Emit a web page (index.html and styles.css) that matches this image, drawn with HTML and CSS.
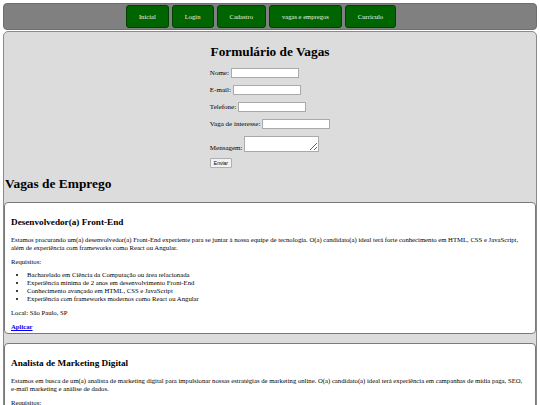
FILE: index.html
```html
<!DOCTYPE html>
<html lang="pt-BR">
<head>
  <meta charset="UTF-8">
  <title>Vagas de Emprego</title>
  <link rel="stylesheet" href="styles.css">
</head>
<body>

  <header class="topbar">
    <nav class="menu">
      <a href="#" class="menu-btn">Inicial</a>
      <a href="#" class="menu-btn">Login</a>
      <a href="#" class="menu-btn">Cadastro</a>
      <a href="#" class="menu-btn">vagas e empregos</a>
      <a href="#" class="menu-btn">Curriculo</a>
    </nav>
  </header>

  <main class="content">
    <section class="form-box">
      <h2>Formulário de Vagas</h2>
      <form class="vaga-form">
        <p><label for="nome">Nome:</label> <input type="text" id="nome"></p>
        <p><label for="email">E-mail:</label> <input type="email" id="email"></p>
        <p><label for="tel">Telefone:</label> <input type="tel" id="tel"></p>
        <p><label for="vaga">Vaga de interesse:</label> <input type="text" id="vaga"></p>
        <p class="msg-row"><label for="msg">Mensagem:</label> <textarea id="msg"></textarea></p>
        <button type="submit">Enviar</button>
      </form>
    </section>

    <h1>Vagas de Emprego</h1>

    <!-- Vaga 1 -->
    <article class="vaga">
      <h3>Desenvolvedor(a) Front-End</h3>
      <p>Estamos procurando um(a) desenvolvedor(a) Front-End experiente para se juntar à nossa equipe de tecnologia. O(a) candidato(a) ideal terá forte conhecimento em HTML, CSS e JavaScript, além de experiência com frameworks como React ou Angular.</p>
      <p class="req">Requisitos:</p>
      <ul>
        <li>Bacharelado em Ciência da Computação ou área relacionada</li>
        <li>Experiência mínima de 2 anos em desenvolvimento Front-End</li>
        <li>Conhecimento avançado em HTML, CSS e JavaScript</li>
        <li>Experiência com frameworks modernos como React ou Angular</li>
      </ul>
      <p>Local: São Paulo, SP</p>
      <a href="#" class="aplicar">Aplicar</a>
    </article>

    <!-- Vaga 2 -->
    <article class="vaga">
      <h3>Analista de Marketing Digital</h3>
      <p>Estamos em busca de um(a) analista de marketing digital para impulsionar nossas estratégias de marketing online. O(a) candidato(a) ideal terá experiência em campanhas de mídia paga, SEO, e-mail marketing e análise de dados.</p>
      <p class="req">Requisitos:</p>
      <ul>
        <li>Experiência comprovada em marketing digital</li>
        <li>Conhecimento em Google Ads e redes sociais</li>
        <li>Habilidade com ferramentas de análise de dados</li>
      </ul>
      <p>Local: Rio de Janeiro, RJ</p>
      <a href="#" class="aplicar">Aplicar</a>
    </article>
  </main>

</body>
</html>
```

FILE: styles.css
```css
body {
  margin: 3px;
  font-family: "Liberation Serif", "Times New Roman", serif;
  font-size: 7px;
  color: #000;
  background: #fff;
}

/* Topo */
.topbar {
  background: #808080;
  border: 1px solid #6e6e6e;
  border-radius: 4px;
  padding: 1px 0;
}

.menu {
  display: flex;
  justify-content: center;
  gap: 3px;
  padding-right: 18px;
}

.menu-btn {
  display: block;
  background: #006400;
  color: #e8f0e8;
  font-size: 6.6px;
  text-decoration: none;
  border: 1px solid #004000;
  border-radius: 3px;
  padding: 7px 12px;
  line-height: 7px;
}

/* Conteudo */
.content {
  background: #dcdcdc;
  border: 1px solid #8a8a8a;
  border-radius: 5px;
  margin-top: 1px;
}

.form-box {
  padding-top: 5px;
  text-align: center;
}

.form-box h2 {
  font-size: 13.3px;
  margin: 7px 0 8px;
}

.vaga-form {
  display: inline-block;
  text-align: left;
}

.vaga-form p {
  margin: 0 0 6px;
  line-height: 11px;
}

.vaga-form input {
  width: 66px;
  height: 8px;
  padding: 0;
  border: 1px solid #aaa;
  font-size: 6px;
  vertical-align: middle;
}

.vaga-form .msg-row {
  margin-bottom: 4px;
}

.vaga-form textarea {
  width: 73px;
  height: 14px;
  padding: 0;
  border: 1px solid #aaa;
  font-size: 6px;
  vertical-align: -2px;
}

.vaga-form button {
  font-family: "Liberation Sans", Arial, sans-serif;
  font-size: 5px;
  padding: 1px 3px;
  height: 10px;
  border: 1px solid #b0b0b0;
  background: #f2f2f2;
  border-radius: 1px;
}

h1 {
  font-size: 13.4px;
  margin: 8px 0 10px 1px;
}

/* Cards de vaga */
.vaga {
  background: #fff;
  border: 1px solid #7a7a7a;
  border-radius: 4px;
  padding: 0 6px 3px;
  margin-bottom: 9px;
  font-size: 6.7px;
}

.vaga h3 {
  font-size: 9.2px;
  margin: 0;
  padding: 14px 0 9px;
}

.vaga p {
  margin: 0 0 7px;
  line-height: 7.5px;
}

.vaga p.req {
  margin-bottom: 5px;
}

.vaga ul {
  margin: 0 0 6px;
  padding-left: 16px;
  line-height: 8px;
}

.aplicar {
  display: inline-block;
  color: #0000ee;
  font-weight: bold;
}
```
